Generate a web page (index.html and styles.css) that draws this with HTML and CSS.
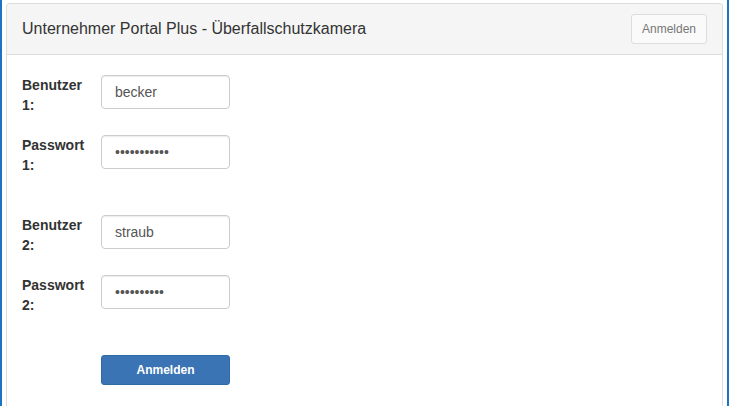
FILE: index.html
```html
<!DOCTYPE html>
<html lang="de">
<head>
<meta charset="utf-8">
<title>Unternehmer Portal Plus - Überfallschutzkamera</title>
<link rel="stylesheet" href="styles.css">
</head>
<body>
<div class="frame">
  <div class="panel">
    <div class="panel-heading">
      <h3 class="panel-title">Unternehmer Portal Plus - Überfallschutzkamera</h3>
      <button class="btn-head" type="button">Anmelden</button>
    </div>
    <div class="panel-body">
      <form class="form">
        <div class="row">
          <label class="label">Benutzer 1:</label>
          <input class="input" type="text" value="becker">
        </div>
        <div class="row">
          <label class="label">Passwort 1:</label>
          <input class="input" type="password" value="xxxxxxxxxxx">
        </div>
        <div class="spacer"></div>
        <div class="row">
          <label class="label">Benutzer 2:</label>
          <input class="input" type="text" value="straub">
        </div>
        <div class="row">
          <label class="label">Passwort 2:</label>
          <input class="input" type="password" value="xxxxxxxxxx">
        </div>
        <div class="spacer"></div>
        <div class="row">
          <span class="label label-empty"></span>
          <button class="btn-primary" type="button">Anmelden</button>
        </div>
      </form>
    </div>
  </div>
</div>
</body>
</html>
```
FILE: styles.css
```css
html, body {
  margin: 0;
  padding: 0;
  height: 100%;
  background: #fff;
}
body {
  font-family: "Liberation Sans", Arial, sans-serif;
  font-size: 14px;
  color: #333;
  overflow: hidden;
}
.frame {
  box-sizing: border-box;
  height: 100vh;
  display: flex;
  flex-direction: column;
  border-left: 2px solid #1a73c4;
  border-right: 2px solid #1a73c4;
  padding: 3px 4px 0 4px;
}
.panel {
  flex: 1;
  border: 1px solid #ddd;
  border-bottom: none;
  border-radius: 4px 4px 0 0;
  background: #fff;
}
.panel-heading {
  display: flex;
  align-items: center;
  justify-content: space-between;
  height: 30px;
  padding: 10px 15px;
  background: #f5f5f5;
  border-bottom: 1px solid #ddd;
  border-radius: 3px 3px 0 0;
}
.panel-title {
  margin: 0;
  font-size: 16px;
  font-weight: normal;
  color: #333;
}
.btn-head {
  box-sizing: border-box;
  height: 30px;
  width: 76px;
  padding: 0;
  font-family: "Liberation Sans", Arial, sans-serif;
  font-size: 12px;
  color: #777;
  background: #fafafa;
  border: 1px solid #ddd;
  border-radius: 3px;
}
.panel-body {
  padding: 20px 15px 0 15px;
}
.form {
  display: flex;
  flex-direction: column;
  gap: 20px;
}
.row {
  display: flex;
  align-items: flex-start;
}
.label {
  box-sizing: border-box;
  width: 79px;
  padding-right: 15px;
  font-weight: bold;
  line-height: 20px;
  min-height: 40px;
}
.label-empty {
  min-height: 0;
}
.spacer {
  height: 0;
}
.input {
  box-sizing: border-box;
  width: 129px;
  height: 34px;
  margin: 0;
  padding: 6px 13px;
  font-family: "Liberation Sans", Arial, sans-serif;
  font-size: 14px;
  color: #555;
  background: #fff;
  border: 1px solid #ccc;
  border-radius: 4px;
  box-shadow: inset 0 1px 1px rgba(0,0,0,.075);
  outline: none;
}
.btn-primary {
  box-sizing: border-box;
  width: 129px;
  height: 30px;
  padding: 0;
  font-family: "Liberation Sans", Arial, sans-serif;
  font-size: 12px;
  font-weight: bold;
  color: #fff;
  background: #3b74b4;
  border: 1px solid #2e6da4;
  border-radius: 3px;
}
```
